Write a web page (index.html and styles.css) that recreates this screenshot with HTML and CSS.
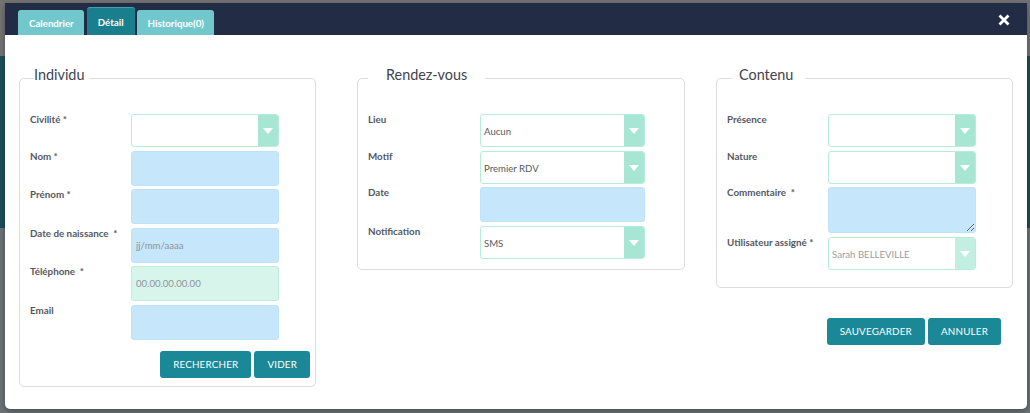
FILE: index.html
```html
<!DOCTYPE html>
<html lang="fr">

<head>
    <meta charset="UTF-8">
    <title>Détail du rendez-vous</title>
    <link rel="stylesheet" href="styles.css">
</head>

<body>
    <div class="modal">
        <div class="modal-header">
            <nav class="tabs">
                <a class="tab">Calendrier</a>
                <a class="tab active">Détail</a>
                <a class="tab">Historique(0)</a>
            </nav>
            <button class="close" aria-label="Fermer">
                <svg width="12" height="12" viewBox="0 0 12 12">
                    <path d="M1.5 1.5 L10.5 10.5 M10.5 1.5 L1.5 10.5" stroke="#fff" stroke-width="2.8" />
                </svg>
            </button>
        </div>

        <div class="modal-body">
            <!-- Individu -->
            <fieldset class="panel panel-individu">
                <legend>Individu</legend>
                <div class="form-grid">
                    <label>Civilité *</label>
                    <div class="select"><span></span><i class="arrow"></i></div>

                    <label>Nom *</label>
                    <input class="field" type="text">

                    <label>Prénom *</label>
                    <input class="field" type="text">

                    <label>Date de naissance &nbsp;*</label>
                    <input class="field" type="text" placeholder="jj/mm/aaaa">

                    <label>Téléphone &nbsp;*</label>
                    <input class="field field-ok" type="text" placeholder="00.00.00.00.00">

                    <label>Email</label>
                    <input class="field" type="text">
                </div>
                <div class="actions">
                    <button class="btn">RECHERCHER</button>
                    <button class="btn">VIDER</button>
                </div>
            </fieldset>

            <!-- Rendez-vous -->
            <fieldset class="panel panel-rdv">
                <legend>Rendez-vous</legend>
                <div class="form-grid">
                    <label>Lieu</label>
                    <div class="select"><span>Aucun</span><i class="arrow"></i></div>

                    <label>Motif</label>
                    <div class="select"><span>Premier RDV</span><i class="arrow"></i></div>

                    <label>Date</label>
                    <input class="field" type="text">

                    <label>Notification</label>
                    <div class="select"><span>SMS</span><i class="arrow"></i></div>
                </div>
            </fieldset>

            <!-- Contenu -->
            <div class="col-contenu">
                <fieldset class="panel panel-contenu">
                    <legend>Contenu</legend>
                    <div class="form-grid">
                        <label>Présence</label>
                        <div class="select"><span></span><i class="arrow"></i></div>

                        <label>Nature</label>
                        <div class="select"><span></span><i class="arrow"></i></div>

                        <label>Commentaire &nbsp;*</label>
                        <textarea class="field"></textarea>

                        <label>Utilisateur assigné *</label>
                        <div class="select disabled"><span>Sarah BELLEVILLE</span><i class="arrow"></i></div>
                    </div>
                </fieldset>
                <div class="actions actions-main">
                    <button class="btn">SAUVEGARDER</button>
                    <button class="btn">ANNULER</button>
                </div>
            </div>
        </div>
    </div>
</body>

</html>
```

FILE: styles.css
```css
/* styles.css */
body {
    margin: 0;
    font-family: Lato, "Open Sans", sans-serif;
    background: linear-gradient(to bottom, #747474 0, #747474 56px, #1f4d58 56px, #1f4d58 228px, #6b7377 228px);
    height: 413px;
    overflow: hidden;
}

.modal {
    width: 1022px;
    height: 406px;
    margin: 3px 0 0 5px;
    background-color: white;
    border-radius: 0 0 5px 5px;
    box-shadow: 0 2px 6px rgba(0, 0, 0, 0.35);
    overflow: hidden;
}

/* header with tabs */
.modal-header {
    height: 32px;
    background-color: #222c44;
    display: flex;
    justify-content: space-between;
    align-items: flex-end;
    padding: 0 17px 0 13px;
}

.tabs {
    display: flex;
    align-items: flex-end;
}

.tab {
    height: 25px;
    line-height: 26px;
    padding: 0 10px 0 11px;
    margin-right: 2px;
    background-color: #72c7cd;
    color: white;
    font-size: 9.7px;
    font-weight: 700;
    border-radius: 3px 3px 0 0;
}

.tab.active {
    height: 28px;
    line-height: 29px;
    padding: 0 11px;
    margin: 0 2px 0 1px;
    background-color: #1a7f8d;
    border-top: 1px solid #3ba4b0;
    box-sizing: border-box;
}

.close {
    align-self: center;
    background: none;
    border: none;
    padding: 0;
    margin-top: 1px;
    cursor: pointer;
    display: flex;
}

/* body */
.modal-body {
    display: flex;
    align-items: flex-start;
    padding: 33px 14px 0 14px;
}

.panel {
    box-sizing: border-box;
    margin: 0;
    border: 1px solid #dcdcdc;
    border-radius: 5px;
    padding: 26px 0 10px 10px;
}

.panel legend {
    font-size: 14.4px;
    line-height: 14px;
    padding-bottom: 6px;
    color: #40454f;
}

.panel-individu {
    width: 297px;
    margin-right: 41px;
    padding-bottom: 8px;
}

.panel-individu legend {
    margin-left: 4px;
    padding-left: 0;
    padding-right: 5px;
}

.panel-rdv {
    width: 328px;
    margin-right: 31px;
}

.panel-rdv legend {
    margin-left: 0;
    padding-left: 18px;
    padding-right: 18px;
}

.col-contenu {
    width: 297px;
}

.panel-contenu {
    width: 297px;
    padding-bottom: 17px;
}

.panel-contenu legend {
    margin-left: 5px;
    padding-left: 7px;
    padding-right: 12px;
}

.form-grid {
    display: grid;
    grid-template-columns: 101px 148px;
    row-gap: 3.5px;
}

.panel-rdv .form-grid {
    grid-template-columns: 112px 165px;
}

.form-grid label {
    font-size: 9.8px;
    line-height: 11px;
    font-weight: 700;
    color: #54585f;
    padding-top: 0;
    white-space: nowrap;
}

/* inputs */
.field {
    box-sizing: border-box;
    height: 35px;
    margin: 0;
    padding: 0 4px;
    border: 1px solid #bfe2f8;
    border-radius: 3px;
    background-color: #c6e6fb;
    font-family: inherit;
    font-size: 9.6px;
    color: #555;
}

.field::placeholder {
    color: #8d9399;
}

.field-ok {
    background-color: #d8f5ec;
    border-color: #bdeedc;
}

textarea.field {
    height: 46px;
    resize: vertical;
}

.select {
    box-sizing: border-box;
    height: 33px;
    display: flex;
    border: 1px solid #b6ecd9;
    border-radius: 3px;
    background-color: white;
    overflow: hidden;
}

.select span {
    flex: 1;
    padding: 2px 0 0 3px;
    font-size: 9.6px;
    color: #555a60;
    display: flex;
    align-items: center;
}

.select .arrow {
    width: 20px;
    background-color: #a6e6d3;
    position: relative;
}

.select .arrow::after {
    content: "";
    position: absolute;
    left: 5px;
    top: 13px;
    border-left: 5px solid transparent;
    border-right: 5px solid transparent;
    border-top: 6px solid white;
}

.select.disabled span {
    color: #9a9da2;
}

.select.disabled .arrow {
    background-color: #c3efe2;
}

/* buttons */
.actions {
    display: flex;
    justify-content: flex-end;
    gap: 3px;
    margin: 11px 5px 0 0;
}

.actions-main {
    margin: 30px 12px 0 0;
}

.btn {
    height: 27px;
    padding: 0 13px;
    background-color: #1a8897;
    color: white;
    border: none;
    border-radius: 3px;
    font-family: inherit;
    font-size: 9.8px;
    letter-spacing: 0.2px;
    cursor: pointer;
}

.btn:hover {
    background-color: #167682;
}
```
